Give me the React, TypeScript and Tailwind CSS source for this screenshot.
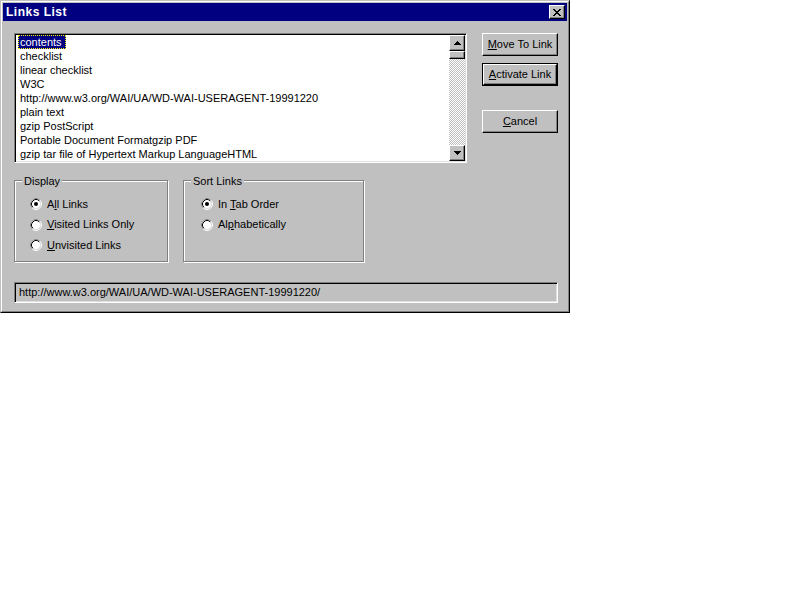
import React from "react";

const items = [
  "contents",
  "checklist",
  "linear checklist",
  "W3C",
  "http://www.w3.org/WAI/UA/WD-WAI-USERAGENT-19991220",
  "plain text",
  "gzip PostScript",
  "Portable Document Formatgzip PDF",
  "gzip tar file of Hypertext Markup LanguageHTML",
];

const raised =
  "border border-t-white border-l-white border-r-black border-b-black shadow-[inset_-1px_-1px_0_#808080]";
const sunken =
  "border border-t-[#808080] border-l-[#808080] border-r-white border-b-white shadow-[inset_1px_1px_0_#000,inset_-1px_-1px_0_#dfdfdf]";

const CloseGlyph = () => (
  <svg width="8" height="7" viewBox="0 0 8 7" shapeRendering="crispEdges">
    {[
      [0, 0, 2], [6, 0, 2],
      [1, 1, 2], [5, 1, 2],
      [2, 2, 4],
      [3, 3, 2],
      [2, 4, 4],
      [1, 5, 2], [5, 5, 2],
      [0, 6, 2], [6, 6, 2],
    ].map(([x, y, w], i) => (
      <rect key={i} x={x} y={y} width={w} height={1} fill="#000" />
    ))}
  </svg>
);

const Arrow = ({ up }: { up?: boolean }) => (
  <svg width="7" height="4" viewBox="0 0 7 4" shapeRendering="crispEdges">
    {[0, 1, 2, 3].map((r) => (
      <rect
        key={r}
        x={up ? 3 - r : r}
        y={r}
        width={up ? 1 + r * 2 : 7 - r * 2}
        height={1}
        fill="#000"
      />
    ))}
  </svg>
);

const Radio = ({ checked }: { checked?: boolean }) => (
  <svg width="12" height="12" viewBox="0 0 12 12" className="shrink-0">
    <circle cx="6" cy="6" r="5.5" fill="none" stroke="#fff" />
    <path d="M2.11 9.89 A5.5 5.5 0 0 1 9.89 2.11" fill="none" stroke="#808080" />
    <circle cx="6" cy="6" r="4.5" fill="#fff" stroke="#dfdfdf" />
    <path d="M2.82 9.18 A4.5 4.5 0 0 1 9.18 2.82" fill="none" stroke="#000" />
    {checked && <circle cx="6" cy="6" r="2" fill="#000" />}
  </svg>
);

const Label = ({ text, u }: { text: string; u: number }) => (
  <span>
    {text.slice(0, u)}
    <span className="underline underline-offset-[1px]">{text[u]}</span>
    {text.slice(u + 1)}
  </span>
);

const Btn = ({ text, u, def }: { text: string; u: number; def?: boolean }) => (
  <div className={`h-[23px] w-[76px] ${def ? "border border-black" : ""}`}>
    <div className={`h-full w-full flex items-center justify-center ${raised}`}>
      <Label text={text} u={u} />
    </div>
  </div>
);

const RadioRow = ({
  text,
  u,
  checked,
}: {
  text: string;
  u: number;
  checked?: boolean;
}) => (
  <div className="h-[20.5px] flex items-center gap-[5px]">
    <Radio checked={checked} />
    <Label text={text} u={u} />
  </div>
);

export default function App() {
  return (
    <div
      className="text-[11px] leading-[13px] text-black"
      style={{ fontFamily: '"Liberation Sans", Arial, sans-serif' }}
    >
      <div className="w-[570px] h-[313px] bg-[#c0c0c0] border border-t-[#c0c0c0] border-l-[#c0c0c0] border-r-black border-b-black">
        <div className="h-full border border-t-white border-l-white border-r-[#808080] border-b-[#808080] p-px flex flex-col">
          {/* title bar */}
          <div className="h-[18px] bg-[#000080] flex items-center justify-between pl-[3px] pr-[2px]">
            <span className="text-white font-bold text-[12px] tracking-[0.5px]">Links List</span>
            <div className={`w-[16px] h-[14px] bg-[#c0c0c0] flex items-center justify-center ${raised}`}>
              <CloseGlyph />
            </div>
          </div>

          <div className="flex-1 pl-[11px] pt-[12px]">
            {/* list + buttons */}
            <div className="flex">
              <div className={`w-[453px] h-[130px] bg-white flex ${sunken} p-[1px]`}>
                <div className="flex-1 flex flex-col">
                  {items.map((t, i) => (
                    <div key={t} className="h-[14px] flex">
                      <span
                        className={`ml-[2px] pl-[1px] h-[14px] leading-[12px] whitespace-nowrap border border-dotted ${
                          i === 0
                            ? "pr-[3px] bg-[#000080] text-white border-[#ffff00]"
                            : "pr-[1px] border-transparent"
                        }`}
                      >
                        {t}
                      </span>
                    </div>
                  ))}
                </div>
                <div className="w-[16px] flex flex-col">
                  <div className={`h-[16px] bg-[#c0c0c0] flex items-center justify-center ${raised}`}>
                    <Arrow up />
                  </div>
                  <div className={`h-[8px] bg-[#c0c0c0] ${raised}`} />
                  <div className="flex-1 [background:repeating-conic-gradient(#c0c0c0_0_25%,#fff_0_50%)_0_0/2px_2px]" />
                  <div className={`h-[16px] bg-[#c0c0c0] flex items-center justify-center ${raised}`}>
                    <Arrow />
                  </div>
                </div>
              </div>

              <div className="ml-[15px] flex flex-col">
                <Btn text="Move To Link" u={0} />
                <div className="mt-[7px]">
                  <Btn text="Activate Link" u={0} def />
                </div>
                <div className="mt-[24px]">
                  <Btn text="Cancel" u={0} />
                </div>
              </div>
            </div>

            {/* group boxes */}
            <div className="flex mt-[17px]">
              <div className="relative w-[154px] h-[82px] border border-[#808080] shadow-[inset_1px_1px_0_#fff,1px_1px_0_#fff] pl-[15px] pt-[13px]">
                <span className="absolute -top-[6px] left-[7px] px-[2px] bg-[#c0c0c0]">Display</span>
                <RadioRow text="All Links" u={1} checked />
                <RadioRow text="Visited Links Only" u={0} />
                <RadioRow text="Unvisited Links" u={0} />
              </div>
              <div className="relative ml-[15px] w-[181px] h-[82px] border border-[#808080] shadow-[inset_1px_1px_0_#fff,1px_1px_0_#fff] pl-[17px] pt-[13px]">
                <span className="absolute -top-[6px] left-[7px] px-[2px] bg-[#c0c0c0]">Sort Links</span>
                <RadioRow text="In Tab Order" u={3} checked />
                <RadioRow text="Alphabetically" u={2} />
              </div>
            </div>

            {/* status */}
            <div className={`mt-[20px] w-[544px] h-[21px] flex items-center pl-[4px] ${sunken}`}>
              http://www.w3.org/WAI/UA/WD-WAI-USERAGENT-19991220/
            </div>
          </div>
        </div>
      </div>
    </div>
  );
}
